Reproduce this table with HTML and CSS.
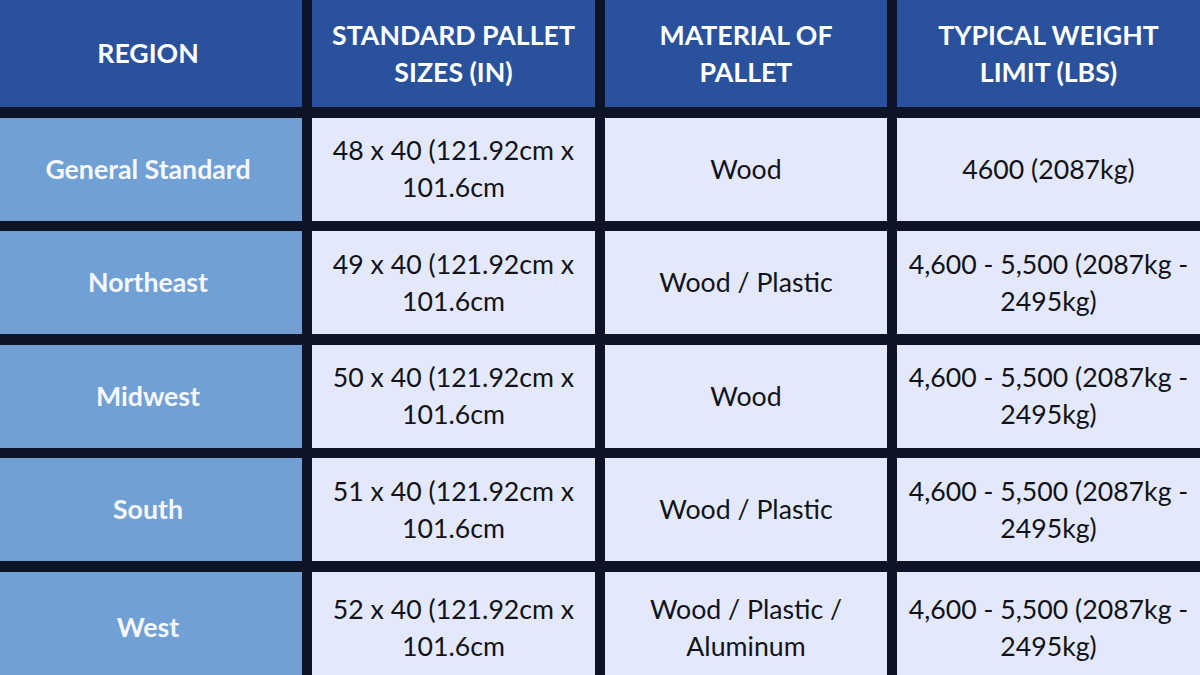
FILE: index.html
```html
<!DOCTYPE html>
<html>
<head>
<meta charset="utf-8">
<link rel="stylesheet" href="styles.css">
</head>
<body>
<div class="table">
  <div class="cell head first">REGION</div>
  <div class="cell head">STANDARD PALLET<br>SIZES (IN)</div>
  <div class="cell head">MATERIAL OF<br>PALLET</div>
  <div class="cell head">TYPICAL WEIGHT<br>LIMIT (LBS)</div>

  <div class="cell region first">General Standard</div>
  <div class="cell data">48 x 40 (121.92cm x<br>101.6cm</div>
  <div class="cell data">Wood</div>
  <div class="cell data">4600 (2087kg)</div>

  <div class="cell region first">Northeast</div>
  <div class="cell data">49 x 40 (121.92cm x<br>101.6cm</div>
  <div class="cell data">Wood / Plastic</div>
  <div class="cell data">4,600 - 5,500 (2087kg -<br>2495kg)</div>

  <div class="cell region first">Midwest</div>
  <div class="cell data">50 x 40 (121.92cm x<br>101.6cm</div>
  <div class="cell data">Wood</div>
  <div class="cell data">4,600 - 5,500 (2087kg -<br>2495kg)</div>

  <div class="cell region first">South</div>
  <div class="cell data">51 x 40 (121.92cm x<br>101.6cm</div>
  <div class="cell data">Wood / Plastic</div>
  <div class="cell data">4,600 - 5,500 (2087kg -<br>2495kg)</div>

  <div class="cell region first">West</div>
  <div class="cell data">52 x 40 (121.92cm x<br>101.6cm</div>
  <div class="cell data">Wood / Plastic /<br>Aluminum</div>
  <div class="cell data">4,600 - 5,500 (2087kg -<br>2495kg)</div>
</div>
</body>
</html>
```
FILE: styles.css
```css
html, body {
  margin: 0;
  padding: 0;
  background: #0c1426;
}
body {
  width: 1200px;
  height: 675px;
  overflow: hidden;
  font-family: Lato, "Open Sans", sans-serif;
}
.table {
  display: grid;
  grid-template-columns: 302px 283px 282px 1fr;
  grid-template-rows: 107px repeat(4, 103px) 112px;
  column-gap: 10px;
  row-gap: 10.5px;
  width: 1200px;
}
.cell {
  display: flex;
  align-items: center;
  justify-content: center;
  text-align: center;
  font-size: 26.7px;
  line-height: 37px;
  white-space: nowrap;
}
.first {
  padding-right: 6px;
}
.head {
  background: #2a519c;
  color: #ffffff;
  font-weight: 700;
}
.region {
  background: #70a0d4;
  color: #f6f8fc;
  font-weight: 700;
}
.data {
  background: #e4e8fb;
  color: #111318;
  font-weight: 400;
}
```
